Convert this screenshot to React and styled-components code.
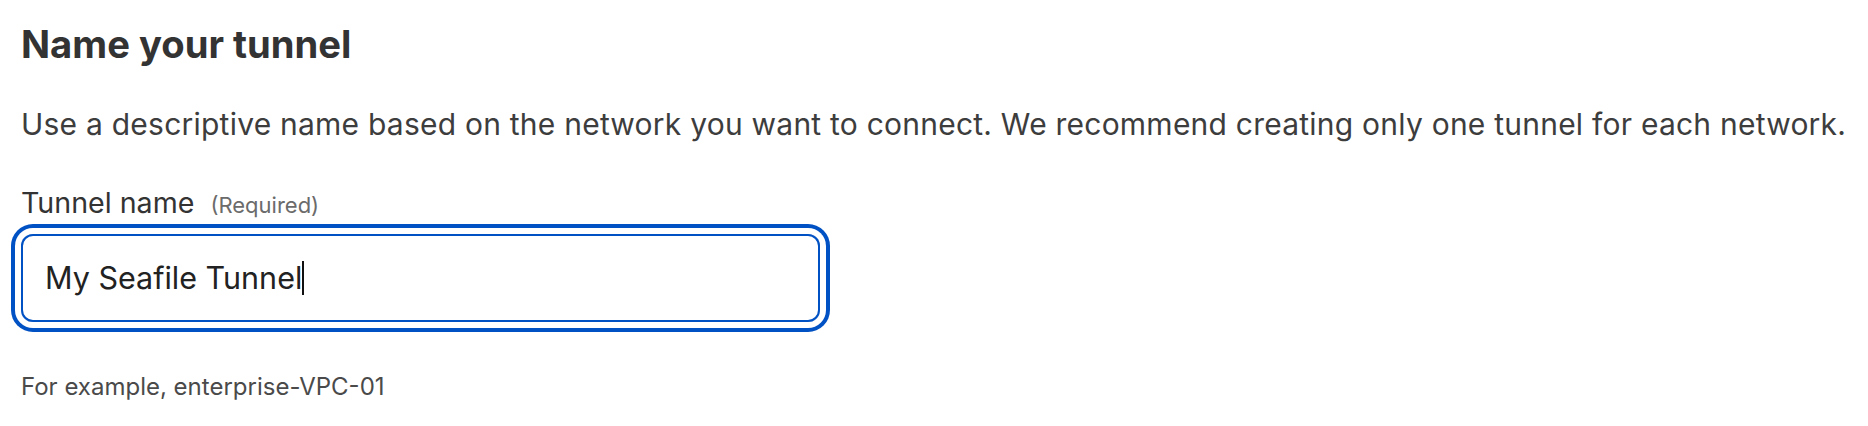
import React from "react";
import styled, { createGlobalStyle } from "styled-components";

const GlobalStyle = createGlobalStyle`
  html, body {
    margin: 0;
    padding: 0;
    background: #fff;
  }
  body {
    font-family: Inter, "Noto Sans", "Liberation Sans", sans-serif;
    color: #333;
  }
`;

const App = () => (
  <>
    <GlobalStyle />
    <Section>
      <Heading>Name your tunnel</Heading>
      <Intro>
        Use a descriptive name based on the network you want to connect. We
        recommend creating only one tunnel for each network.
      </Intro>
      <Field>
        <Label>
          Tunnel name <Hint>(Required)</Hint>
        </Label>
        <InputBox>
          My Seafile Tunnel
          <Caret />
        </InputBox>
      </Field>
      <Helper>For example, enterprise-VPC-01</Helper>
    </Section>
  </>
);

const Section = styled.div`
  display: flex;
  flex-direction: column;
  padding: 22px 21px;
`;

const Heading = styled.h2`
  margin: 0;
  font-size: 38.2px;
  line-height: 44px;
  font-weight: 700;
  color: #333;
`;

const Intro = styled.p`
  margin: 36px 0 0;
  font-size: 30px;
  letter-spacing: 0.23px;
  line-height: 45px;
  color: #3d3d3d;
  white-space: nowrap;
`;

const Field = styled.div`
  display: flex;
  flex-direction: column;
  margin-top: 38px;
`;

const Label = styled.label`
  font-size: 28.6px;
  line-height: 36px;
  color: #333;
`;

const Hint = styled.span`
  margin-left: 8px;
  font-size: 22px;
  color: #6b6b6b;
`;

const InputBox = styled.div`
  display: flex;
  align-items: center;
  box-sizing: border-box;
  width: 799px;
  height: 88px;
  margin-top: 11px;
  padding: 0 22px;
  border: 2px solid #0051c3;
  border-radius: 12px;
  box-shadow: 0 0 0 6px #fff, 0 0 0 10px #0051c3;
  font-size: 30.5px;
  line-height: 36px;
  color: #222;
`;

const Caret = styled.span`
  display: inline-block;
  width: 2px;
  height: 34px;
  background: #111;
`;

const Helper = styled.div`
  margin-top: 48px;
  font-size: 24px;
  line-height: 33px;
  color: #4a4a4a;
`;

export default App;
